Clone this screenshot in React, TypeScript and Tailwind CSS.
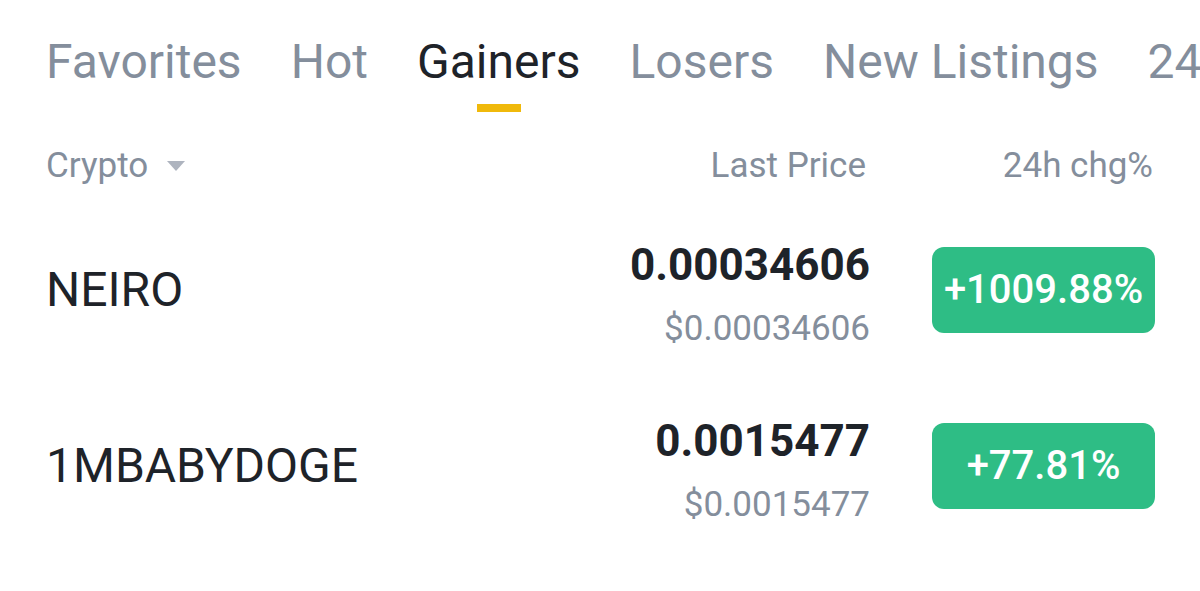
import { useState } from "react";

const tabs = ["Favorites", "Hot", "Gainers", "Losers", "New Listings", "24h Vol", "Market Cap"];

type Row = { name: string; price: string; usd: string; change: string };

const rows: Row[] = [
  { name: "NEIRO", price: "0.00034606", usd: "$0.00034606", change: "+1009.88%" },
  { name: "1MBABYDOGE", price: "0.0015477", usd: "$0.0015477", change: "+77.81%" }
];

const App = () => {
  const [active, setActive] = useState("Gainers");

  return (
    <div className="w-[1200px] h-[591px] bg-white overflow-hidden font-['Roboto','Liberation_Sans',sans-serif]">
      <nav className="flex gap-[49px] pl-[46px] pt-[34px] whitespace-nowrap">
        {tabs.map((tab) => (
          <button
            key={tab}
            onClick={() => setActive(tab)}
            className={`flex flex-col items-center text-[48px] leading-[56px] ${
              active === tab ? "text-[#1e2329]" : "text-[#848e9c]"
            }`}
          >
            {tab}
            <span className={`mt-[14px] h-[8px] w-[44px] ${active === tab ? "bg-[#f0b90b]" : "bg-transparent"}`} />
          </button>
        ))}
      </nav>

      <div className="flex items-center pl-[46px] pr-[47px] mt-[34px] text-[35px] leading-[40px] text-[#848e9c]">
        <div className="flex-1 flex items-center gap-[18px]">
          Crypto
          <svg width="20" height="12" viewBox="0 0 20 12">
            <path d="M1 1h18l-9 10z" fill="#aeb4bf" />
          </svg>
        </div>
        <div className="pr-[2px]">Last Price</div>
        <div className="w-[223px] ml-[62px] text-right">24h chg%</div>
      </div>

      <div className="pl-[46px] pr-[45px] mt-[45px] flex flex-col gap-[58px]">
        {rows.map((row) => (
          <div key={row.name} className="flex items-center">
            <div className="flex-1 text-[48px] text-[#1e2329]">{row.name}</div>
            <div className="flex flex-col items-end pt-[8px]">
              <span className="text-[44px] leading-[52px] font-bold text-[#1e2329]">{row.price}</span>
              <span className="text-[35px] leading-[40px] mt-[18px] text-[#848e9c]">{row.usd}</span>
            </div>
            <div className="ml-[62px] w-[223px] h-[86px] rounded-[12px] bg-[#2ebd85] flex items-center justify-center text-[40px] font-medium text-white">
              {row.change}
            </div>
          </div>
        ))}
      </div>
    </div>
  );
};

export default App;
